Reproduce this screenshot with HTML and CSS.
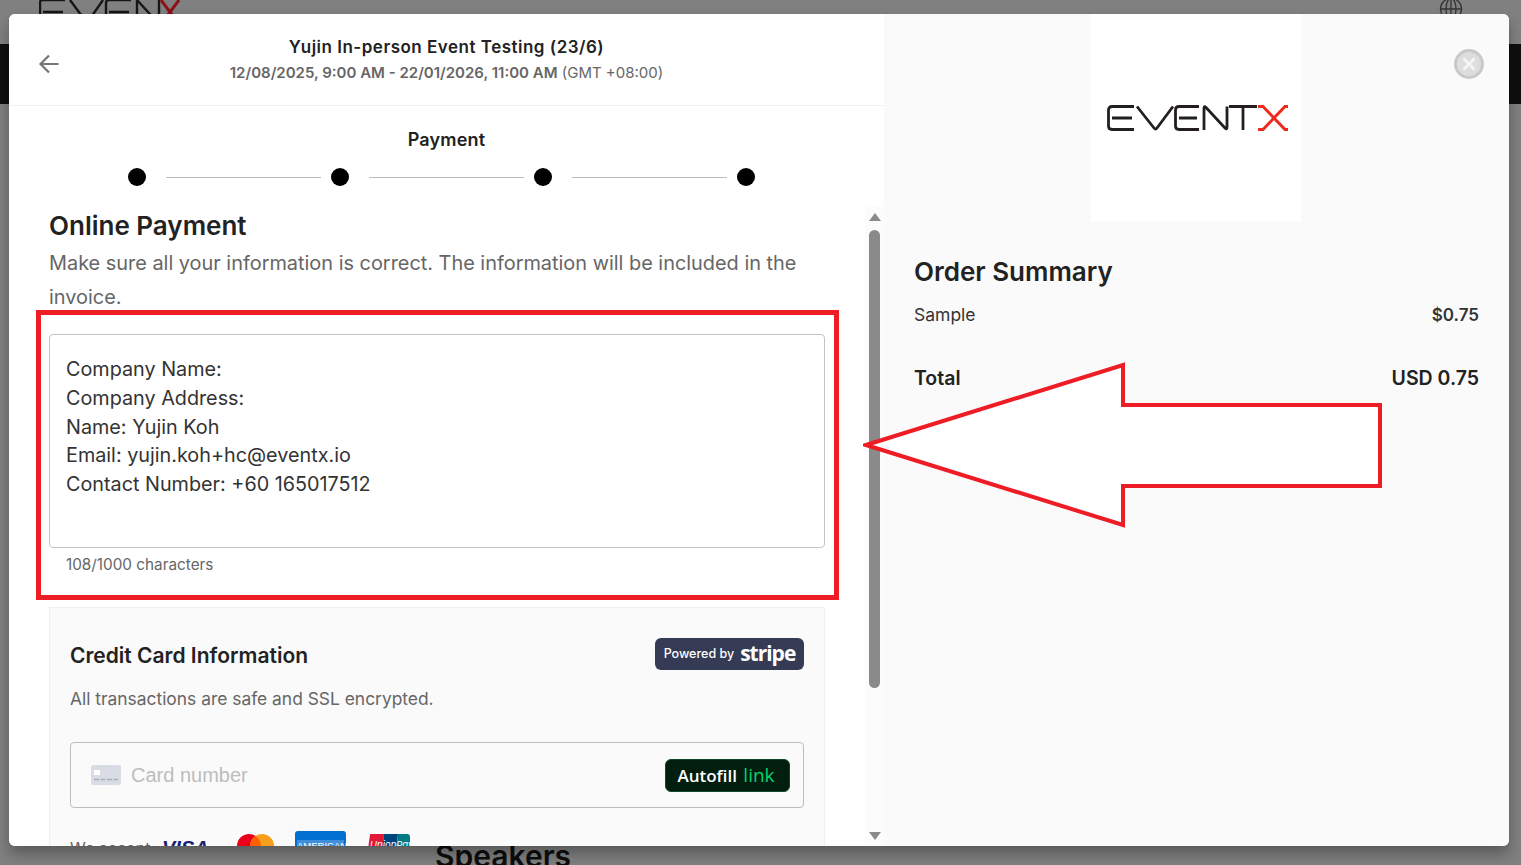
FILE: index.html
```html
<!DOCTYPE html>
<html lang="en">

<head>
    <meta charset="UTF-8">
    <meta name="viewport" content="width=device-width, initial-scale=1.0">
    <title>Payment</title>
    <link rel="stylesheet" href="styles.css">
</head>

<body>

    <div class="backdrop">
        <div class="backTop">
            <svg class="backLogo" width="145" height="30" viewBox="0 0 145 30" fill="none">
                <path d="M26 2H4Q1 2 1 5V23Q1 26 4 26H26M4 14H24" stroke="#161616" stroke-width="2.4" />
                <path d="M31 2L48 25L64 2" stroke="#161616" stroke-width="2.4" />
                <path d="M92 2H70Q67 2 67 5V23Q67 26 70 26H92M70 14H90" stroke="#161616" stroke-width="2.4" />
                <path d="M98 26V2L120 26V2" stroke="#161616" stroke-width="2.4" />
                <path d="M122 2L140 26M140 2L122 26" stroke="#8c1018" stroke-width="3" />
            </svg>
            <svg class="backGlobe" width="24" height="24" viewBox="0 0 24 24" fill="none" stroke="#333" stroke-width="1.3">
                <circle cx="12" cy="12" r="10.5" />
                <ellipse cx="12" cy="12" rx="5" ry="10.5" />
                <path d="M1.5 12H22.5M12 1.5V22.5" />
            </svg>
        </div>
        <div class="backBar"></div>
        <div class="backSpeakers">Speakers</div>
    </div>

    <div class="modal">
        <section class="leftPanel">
            <header class="modalHeader">
                <svg class="backArrow" width="24" height="24" viewBox="0 0 24 24" fill="none" stroke="#777" stroke-width="2.2">
                    <path d="M21.5 12H3.5M12 3.5L3.5 12L12 20.5" />
                </svg>
                <div class="eventInfo">
                    <div class="eventName">Yujin In-person Event Testing (23/6)</div>
                    <div class="eventDate"><b>12/08/2025, 9:00 AM - 22/01/2026, 11:00 AM</b> (GMT +08:00)</div>
                </div>
            </header>

            <div class="stepTitle">Payment</div>
            <div class="stepper">
                <span class="stepDot"></span>
                <span class="stepLine"></span>
                <span class="stepDot"></span>
                <span class="stepLine"></span>
                <span class="stepDot"></span>
                <span class="stepLine"></span>
                <span class="stepDot"></span>
            </div>

            <div class="scrollArea">
                <div class="formCol">
                    <h2 class="formTitle">Online Payment</h2>
                    <p class="formNote">Make sure all your information is correct. The information will be included in the invoice.</p>

                    <div class="invoiceBox">
                        <div class="invoiceLines">
                            <div>Company Name:</div>
                            <div>Company Address:</div>
                            <div>Name: Yujin Koh</div>
                            <div>Email: yujin.koh+hc@eventx.io</div>
                            <div>Contact Number: +60 165017512</div>
                        </div>
                    </div>
                    <div class="charCount">108/1000 characters</div>

                    <div class="cardPanel">
                        <div class="cardHead">
                            <h3>Credit Card Information</h3>
                            <div class="stripeBadge"><span class="poweredBy">Powered by</span><span class="stripeWord">stripe</span></div>
                        </div>
                        <p class="cardNote">All transactions are safe and SSL encrypted.</p>
                        <div class="cardInput">
                            <svg width="30" height="20" viewBox="0 0 30 20">
                                <rect width="30" height="20" rx="2" fill="#d9dce4" />
                                <rect x="3" y="5" width="6" height="5" fill="#fff" />
                                <path d="M3 14.5H27" stroke="#a9aebb" stroke-width="1.6" stroke-dasharray="5 1.5" />
                            </svg>
                            <span class="cardPlaceholder">Card number</span>
                            <div class="autofill">Autofill <span>link</span></div>
                        </div>
                        <div class="accept">
                            <span class="acceptText">We accept</span>
                            <span class="visa">VISA</span>
                            <svg class="master" width="37" height="24" viewBox="0 0 37 24">
                                <circle cx="12" cy="12" r="12" fill="#eb001b" />
                                <circle cx="25" cy="12" r="12" fill="#f79e1b" />
                                <path d="M18.5 2A12 12 0 0 1 18.5 22A12 12 0 0 1 18.5 2Z" fill="#ff5f00" />
                            </svg>
                            <span class="amex"><span class="amexWord">AMERICAN</span></span>
                            <span class="unionPay"><i class="upRed"></i><i class="upBlue"></i><i class="upTeal"></i><em>UnionPay</em></span>
                        </div>
                    </div>
                </div>
                <div class="scrollbar">
                    <span class="arrowUp"></span>
                    <span class="thumb"></span>
                    <span class="arrowDown"></span>
                </div>
            </div>
        </section>

        <aside class="rightPanel">
            <div class="logoRow">
                <div class="logoBox">
                    <svg width="182" height="30" viewBox="0 0 182 30" fill="none" stroke="#231f20" stroke-width="2.8">
                        <path d="M27 2.5H5Q1.5 2.5 1.5 6V22Q1.5 25.5 5 25.5H27M5 14H25" />
                        <path d="M30 2.5L47 24Q48.5 26 50 24L66 2.5" />
                        <path d="M92 2.5H72Q68.5 2.5 68.5 6V22Q68.5 25.5 72 25.5H92M72 14H90" />
                        <path d="M97 26V4Q97 1.5 99 3.5L118 24Q120 26 120 23V2.5" />
                        <path d="M122 2.5H150M136 2.5V26" />
                        <path d="M151 2.5H156L178 25.5H181M151 25.5H156L178 2.5H181" stroke="#ee2a1c" stroke-width="3" />
                    </svg>
                </div>
                <svg class="closeBtn" width="30" height="30" viewBox="0 0 30 30" fill="none">
                    <circle cx="15" cy="15" r="13.5" stroke="#c9c9c9" stroke-width="3" fill="#ddd" />
                    <path d="M9.5 9.5L20.5 20.5M20.5 9.5L9.5 20.5" stroke="#f5f5f5" stroke-width="3" />
                </svg>
            </div>
            <div class="summary">
                <h2>Order Summary</h2>
                <div class="summaryRow"><span>Sample</span><b>$0.75</b></div>
                <div class="summaryRow totalRow"><span>Total</span><span>USD 0.75</span></div>
            </div>
        </aside>
    </div>

    <!-- anotaciones rojas encima de la captura -->
    <div class="redBox"></div>
    <svg class="redArrow" width="530" height="175" viewBox="0 0 530 175" fill="#fff" stroke="#ee1c25" stroke-width="4" stroke-linejoin="miter">
        <path d="M3 83L260 3V43H517V124H260V163Z" />
    </svg>

</body>

</html>
```

FILE: styles.css
```css
* {
    box-sizing: border-box;
}

html,
body {
    height: 100%;
}

body {
    margin: 0;
    overflow: hidden;
    font-family: Inter, "Liberation Sans", sans-serif;
    color: #222;
    position: relative;
}

/* pagina oscurecida detras del modal */
.backdrop {
    position: absolute;
    inset: 0;
    background-color: #808080;
    overflow: hidden;
}

.backTop {
    display: flex;
    justify-content: space-between;
    padding: 0 58px 0 39px;
    margin-top: -14px;
    height: 58px;
}

.backLogo {
    margin-top: 12px;
}

.backGlobe {
    margin-top: 11px;
}

.backBar {
    height: 60px;
    background-color: #0e0e0e;
}

.backSpeakers {
    position: absolute;
    left: 435px;
    top: 838px;
    font-size: 30px;
    font-weight: 600;
    color: #0d0d0d;
}

.modal {
    position: absolute;
    left: 9px;
    top: 14px;
    width: 1500px;
    height: 832px;
    display: flex;
    background-color: #fff;
    border-radius: 6px;
    overflow: hidden;
    box-shadow: 0 8px 14px rgba(0, 0, 0, 0.3);
}

.leftPanel {
    width: 875px;
    background-color: #fff;
    display: flex;
    flex-direction: column;
}

.modalHeader {
    height: 92px;
    flex-shrink: 0;
    border-bottom: 1px solid #f2f2f2;
    display: flex;
    align-items: center;
    padding-left: 28px;
}

.backArrow {
    flex-shrink: 0;
    margin-top: 8px;
}

.eventInfo {
    width: 819px;
    text-align: center;
    margin-left: -24px;
    padding-bottom: 3px;
}

.eventName {
    font-size: 17px;
    font-weight: 600;
    line-height: 26px;
    letter-spacing: 0.5px;
}

.eventDate {
    margin-top: 2px;
    font-size: 15px;
    line-height: 21px;
    color: #666;
}

.eventDate b {
    font-weight: 600;
}

.stepTitle {
    text-align: center;
    margin-top: 23px;
    font-size: 18px;
    font-weight: 600;
    line-height: 22px;
    letter-spacing: 0.2px;
}

.stepper {
    display: flex;
    align-items: center;
    margin: 17px 0 0 119px;
    height: 18px;
}

.stepDot {
    width: 18px;
    height: 18px;
    border-radius: 50%;
    background-color: #000;
    flex-shrink: 0;
}

.stepLine {
    width: 155px;
    height: 1px;
    margin: 0 10px 0 20px;
    background-color: #bdbdbd;
}

.scrollArea {
    flex: 1;
    min-height: 0;
    display: flex;
    overflow: hidden;
    margin-top: 20px;
}

.formCol {
    width: 856px;
    padding: 4px 40px 0;
    flex-shrink: 0;
}

.formTitle {
    margin: 0;
    font-size: 26px;
    line-height: 32px;
    font-weight: 600;
}

.formNote {
    margin: 4px 0 0;
    font-size: 19.9px;
    line-height: 34px;
    color: #666;
}

.invoiceBox {
    margin-top: 20px;
    height: 214px;
    border: 1px solid #c4c4c4;
    border-radius: 4px;
    padding: 20px 16px;
}

.invoiceLines {
    font-size: 19.8px;
    line-height: 28.8px;
    color: #333;
}

.charCount {
    margin: 8px 0 0 17px;
    font-size: 15.3px;
    line-height: 17px;
    color: #666;
}

.cardPanel {
    margin-top: 34px;
    background-color: #fafafa;
    border: 1px solid #f0f0f0;
    padding: 30px 20px;
    height: 400px;
}

.cardHead {
    display: flex;
    justify-content: space-between;
    align-items: center;
}

.cardHead h3 {
    margin: 2px 0 0;
    font-size: 21px;
    font-weight: 600;
}

.stripeBadge {
    width: 149px;
    height: 32px;
    background-color: #353a55;
    border-radius: 6px;
    display: flex;
    align-items: center;
    justify-content: center;
    gap: 6px;
    padding-bottom: 2px;
    color: #fff;
}

.poweredBy {
    font-size: 12.5px;
    font-weight: 500;
}

.stripeWord {
    font-family: "Open Sans", sans-serif;
    font-size: 21px;
    font-weight: 700;
    letter-spacing: -1px;
    line-height: 26px;
}

.cardNote {
    margin: 17px 0 0;
    font-size: 17.4px;
    line-height: 24px;
    color: #666;
}

.cardInput {
    margin-top: 31px;
    height: 66px;
    border: 1px solid #bdbdbd;
    border-radius: 4px;
    display: flex;
    align-items: center;
    padding: 0 13px 0 20px;
}

.cardPlaceholder {
    margin-left: 10px;
    font-family: "Liberation Sans", sans-serif;
    font-size: 20px;
    color: #bdbdbd;
}

.autofill {
    margin-left: auto;
    width: 125px;
    height: 33px;
    padding-right: 3px;
    background-color: #011e0f;
    border: 1px solid #0a4a2a;
    border-radius: 6px;
    color: #fff;
    font-family: "Open Sans", sans-serif;
    font-size: 17px;
    font-weight: 600;
    line-height: 31px;
    text-align: center;
}

.autofill span {
    color: #00d66f;
    font-size: 19px;
    font-weight: 500;
    margin-left: 2px;
}

.accept {
    margin-top: 26px;
    display: flex;
    align-items: flex-start;
    color: #666;
    font-size: 16px;
    height: 40px;
}

.acceptText {
    margin-top: 4px;
    width: 92px;
}

.visa {
    font-family: "Liberation Sans", sans-serif;
    font-weight: 700;
    font-style: italic;
    font-size: 20px;
    color: #1a1f71;
    margin-top: 3px;
    width: 75px;
}

.master {
    margin-top: 0;
}

.amex {
    width: 51px;
    height: 40px;
    margin: -3px 0 0 21px;
    background-color: #016fd0;
    border-radius: 3px;
    padding: 9px 2px 0;
}

.amexWord {
    display: block;
    color: #fff;
    font-family: "Liberation Sans", sans-serif;
    font-size: 9.5px;
    line-height: 12px;
    text-align: center;
    background-color: #3f8fdc;
}

.unionPay {
    width: 42px;
    height: 30px;
    margin-left: 22px;
    position: relative;
    display: flex;
    overflow: hidden;
    border-radius: 3px;
}

.unionPay i {
    flex: 1;
    transform: skewX(-8deg);
}

.upRed {
    background-color: #e21836;
}

.upBlue {
    background-color: #00447c;
}

.upTeal {
    background-color: #007b84;
}

.unionPay em {
    position: absolute;
    left: 2px;
    top: 5px;
    font-size: 9.5px;
    color: #fff;
}

.scrollbar {
    width: 19px;
    background-color: #fcfcfc;
    flex-shrink: 0;
    display: flex;
    flex-direction: column;
    align-items: center;
}

.arrowUp {
    margin-top: 7px;
    border-left: 6px solid transparent;
    border-right: 6px solid transparent;
    border-bottom: 8px solid #8a8a8a;
}

.arrowDown {
    margin-top: 144px;
    border-left: 6px solid transparent;
    border-right: 6px solid transparent;
    border-top: 8px solid #8a8a8a;
}

.thumb {
    width: 11px;
    height: 458px;
    margin-top: 9px;
    background-color: #8a8a8a;
    border-radius: 6px;
}

.rightPanel {
    flex: 1;
    background-color: #fafafa;
}

.logoRow {
    position: relative;
    display: flex;
    padding-left: 207px;
}

.logoBox {
    width: 210px;
    height: 208px;
    background-color: #fff;
    display: flex;
    align-items: center;
    justify-content: center;
    padding: 1px 0 0 4px;
}

.closeBtn {
    position: absolute;
    left: 570px;
    top: 35px;
}

.summary {
    padding: 32px 30px 0 30px;
}

.summary h2 {
    margin: 0;
    font-size: 26px;
    line-height: 36px;
    font-weight: 600;
}

.summaryRow {
    display: flex;
    justify-content: space-between;
    margin-top: 13px;
    font-size: 17.5px;
    line-height: 24px;
    color: #333;
}

.summaryRow b {
    font-size: 17px;
    font-weight: 600;
}

.totalRow {
    margin-top: 39px;
    font-size: 19.5px;
    font-weight: 600;
    line-height: 24px;
    color: #222;
}

.redBox {
    position: absolute;
    left: 36px;
    top: 310px;
    width: 803px;
    height: 290px;
    border: 5px solid #ee1c25;
}

.redArrow {
    position: absolute;
    left: 863px;
    top: 362px;
}
```
